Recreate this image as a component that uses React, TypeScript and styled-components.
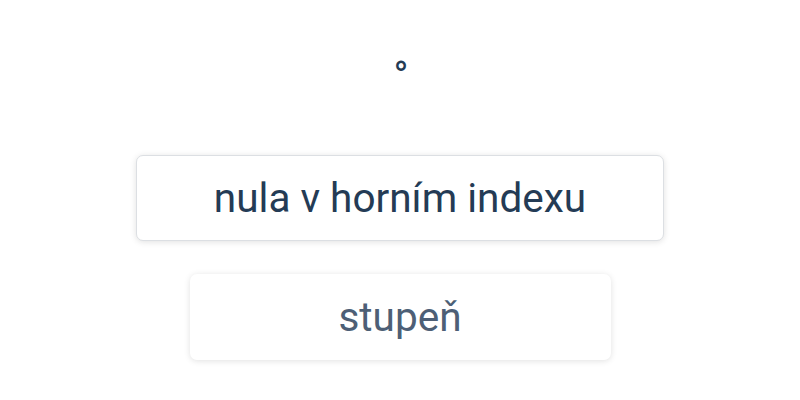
import React from "react";
import styled, { createGlobalStyle } from "styled-components";

const Global = createGlobalStyle`
  html, body { margin: 0; padding: 0; background: #ffffff; }
  body { font-family: Roboto, "Noto Sans", sans-serif; }
`;

const Page = styled.div`
  width: 800px;
  height: 400px;
  display: flex;
  flex-direction: column;
  align-items: center;
  box-sizing: border-box;
  padding-top: 57px;
`;

const Prompt = styled.div`
  font-size: 40px;
  line-height: 40px;
  color: #243b55;
  height: 40px;
  padding-left: 2px;
`;

const Options = styled.div`
  display: flex;
  flex-direction: column;
  align-items: center;
  gap: 33px;
  margin-top: 58px;
`;

const Option = styled.button<{ $width: number; $bordered?: boolean; $muted?: boolean }>`
  width: ${(p) => p.$width}px;
  height: 86px;
  box-sizing: border-box;
  display: flex;
  align-items: center;
  justify-content: center;
  background: #ffffff;
  border: 1px solid ${(p) => (p.$bordered ? "#dcdfe3" : "transparent")};
  border-radius: 7px;
  box-shadow: 0 1px 6px rgba(0, 0, 0, 0.12);
  font-family: Roboto, sans-serif;
  font-size: 40.5px;
  color: ${(p) => (p.$muted ? "#4d5f76" : "#243b55")};
  padding: 0;
  cursor: pointer;
`;

export default function App() {
  return (
    <>
      <Global />
      <Page>
        <Prompt>°</Prompt>
        <Options>
          <Option $width={528} $bordered>nula v horním indexu</Option>
          <Option $width={421} $muted>stupeň</Option>
        </Options>
      </Page>
    </>
  );
}
